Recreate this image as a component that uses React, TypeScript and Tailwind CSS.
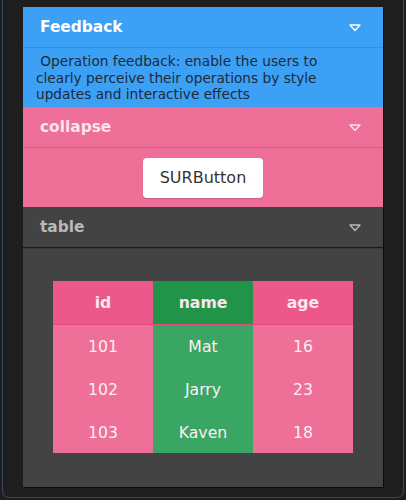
const rows = [
  { id: 101, name: "Mat", age: 16 },
  { id: 102, name: "Jarry", age: 23 },
  { id: 103, name: "Kaven", age: 18 },
]

function Caret({ color }: { color: string }) {
  return (
    <svg width="12" height="8" viewBox="0 0 12 8" className="shrink-0">
      <polygon points="1,1 11,1 6,6.5" fill="none" stroke={color} strokeWidth="1.3" strokeLinejoin="round" />
    </svg>
  )
}

function Header({ title, className, text, caret }: { title: string; className: string; text: string; caret: string }) {
  return (
    <div className={`flex h-[41px] items-center justify-between border-b pl-[17px] pr-[22px] pt-[2px] ${className}`}>
      <span className={`text-[15.4px] font-bold ${text}`}>{title}</span>
      <Caret color={caret} />
    </div>
  )
}

export default function App() {
  return (
    <div className="h-[500px] w-[406px] overflow-hidden bg-[#1e1e1e] px-[2px] pb-[2px] font-['DejaVu_Sans',sans-serif]">
      <div className="h-full rounded-b-[7px] border-x border-b border-[#3b4856] px-[20px] pt-[7px]">
        <div className="flex h-[480px] flex-col shadow-[1px_1px_0_#0b0b0b]">
          <Header title="Feedback" className="bg-[#3ca0f4] border-[#2f8fe6]" text="text-white" caret="#ffffff" />
          <div className="h-[59px] bg-[#3ca0f4] pl-[13px] pr-[24px] pt-[5px] text-[13.7px] leading-[16.5px] text-[#1d2b3a]">
            &nbsp;Operation feedback: enable the users to clearly perceive their operations by style updates and interactive effects
          </div>

          <Header title="collapse" className="bg-[#ee6f98] border-[#e35485]" text="text-[#fde3ec]" caret="#fde3ec" />
          <div className="flex h-[59px] items-center justify-center bg-[#ee6f98]">
            <button className="h-[40px] w-[120px] rounded-[4px] bg-white text-[16px] text-[#333333] shadow-[0_1px_1px_rgba(0,0,0,0.15)]">
              SURButton
            </button>
          </div>

          <Header title="table" className="bg-[#434343] border-[#1a1a1a]" text="text-[#b9b9b9]" caret="#b9b9b9" />
          <div className="flex flex-1 justify-center border-t border-[#3a3a3a] bg-[#434343] pt-[32px]">
            <table className="h-fit w-[300px] border-collapse text-[15.7px]">
              <thead>
                <tr className="h-[43px] border-b border-[#e84a80] font-bold text-[#fbe6ee]">
                  <th className="w-[100px] bg-[#eb5889] pt-[2px]">id</th>
                  <th className="w-[100px] bg-[#22944a] pt-[2px]">name</th>
                  <th className="w-[100px] bg-[#eb5889] pt-[2px]">age</th>
                </tr>
              </thead>
              <tbody>
                {rows.map((r) => (
                  <tr key={r.id} className="h-[43px] text-center text-[#fdeef3]">
                    <td className="bg-[#ee6f98] pt-[2px]">{r.id}</td>
                    <td className="bg-[#3aa664] pt-[2px]">{r.name}</td>
                    <td className="bg-[#ee6f98] pt-[2px]">{r.age}</td>
                  </tr>
                ))}
              </tbody>
            </table>
          </div>
        </div>
      </div>
    </div>
  )
}
